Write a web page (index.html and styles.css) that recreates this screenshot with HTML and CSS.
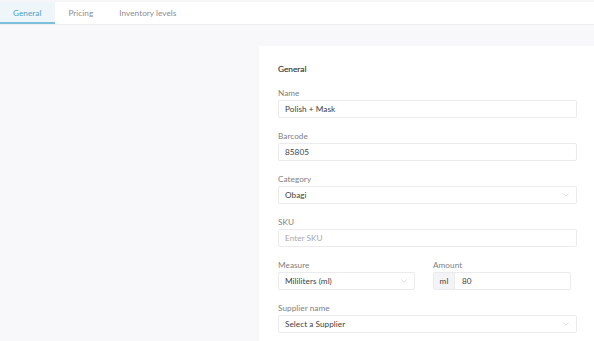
FILE: index.html
```html
<!DOCTYPE html>
<html>
<head>
<meta charset="utf-8">
<link rel="stylesheet" href="styles.css">
</head>
<body>
<div class="tabs">
  <div class="tab active">General</div>
  <div class="tab">Pricing</div>
  <div class="tab">Inventory levels</div>
</div>
<div class="main">
  <div class="side"></div>
  <div class="card">
    <div class="heading">General</div>
    <div class="field">
      <div class="label">Name</div>
      <div class="input">Polish + Mask</div>
    </div>
    <div class="field">
      <div class="label">Barcode</div>
      <div class="input">85805</div>
    </div>
    <div class="field">
      <div class="label">Category</div>
      <div class="input select">Obagi<svg class="chev" viewBox="0 0 8 5"><path d="M0.5 0.5 L4 4 L7.5 0.5" fill="none" stroke="#c2c5cc" stroke-width="0.8"/></svg></div>
    </div>
    <div class="field">
      <div class="label">SKU</div>
      <div class="input placeholder">Enter SKU</div>
    </div>
    <div class="row">
      <div class="field">
        <div class="label">Measure</div>
        <div class="input select">Mililiters (ml)<svg class="chev" viewBox="0 0 8 5"><path d="M0.5 0.5 L4 4 L7.5 0.5" fill="none" stroke="#c2c5cc" stroke-width="0.8"/></svg></div>
      </div>
      <div class="field">
        <div class="label">Amount</div>
        <div class="input group"><span class="addon">ml</span><span class="val">80</span></div>
      </div>
    </div>
    <div class="field">
      <div class="label">Supplier name</div>
      <div class="input select">Select a Supplier<svg class="chev" viewBox="0 0 8 5"><path d="M0.5 0.5 L4 4 L7.5 0.5" fill="none" stroke="#c2c5cc" stroke-width="0.8"/></svg></div>
    </div>
  </div>
</div>
</body>
</html>
```
FILE: styles.css
```css
* { box-sizing: border-box; }
html, body { margin: 0; height: 100%; }
body {
  background: #f8f8fa;
  font-family: Lato, "Noto Sans", sans-serif;
  font-size: 8.2px;
  letter-spacing: 0.05px;
  color: #444;
  overflow: hidden;
}
.tabs {
  display: flex;
  height: 25px;
  background: #fff;
  border-top: 2px solid #f6f6f8;
  border-bottom: 1px solid #eeeef0;
}
.tab {
  padding: 0 13px;
  line-height: 22px;
  color: #8c8c90;
}
.tab.active {
  background: #eef6fa;
  color: #4d9fc5;
  border-bottom: 2px solid #7dbfdb;
  padding: 0 14px 0 13px;
}
.main {
  display: flex;
  padding-top: 21px;
  height: calc(100% - 25px);
}
.side { width: 259px; flex: none; }
.card {
  flex: 1;
  background: #fff;
  padding: 18px 17px 0 19px;
}
.heading {
  color: #333;
  line-height: 10px;
  margin-bottom: 14px;
  -webkit-text-stroke: 0.15px #333;
}
.field { margin-bottom: 13px; }
.label {
  color: #808084;
  line-height: 10px;
  margin-bottom: 2px;
}
.input {
  height: 18px;
  border: 1px solid #ebebee;
  border-radius: 2px;
  padding: 0 6px;
  line-height: 16px;
  color: #3e3e40;
  display: flex;
  align-items: center;
}
.placeholder { color: #a8a8ac; }
.select { justify-content: space-between; }
.chev { width: 6px; height: 4px; margin-right: 1px; }
.row {
  display: grid;
  grid-template-columns: 137px 138px;
  column-gap: 18px;
}
.group { padding: 0; }
.addon {
  width: 21px;
  height: 100%;
  background: #f4f4f6;
  border-right: 1px solid #ebebee;
  display: flex;
  align-items: center;
  justify-content: center;
}
.val { padding-left: 7px; }
```
